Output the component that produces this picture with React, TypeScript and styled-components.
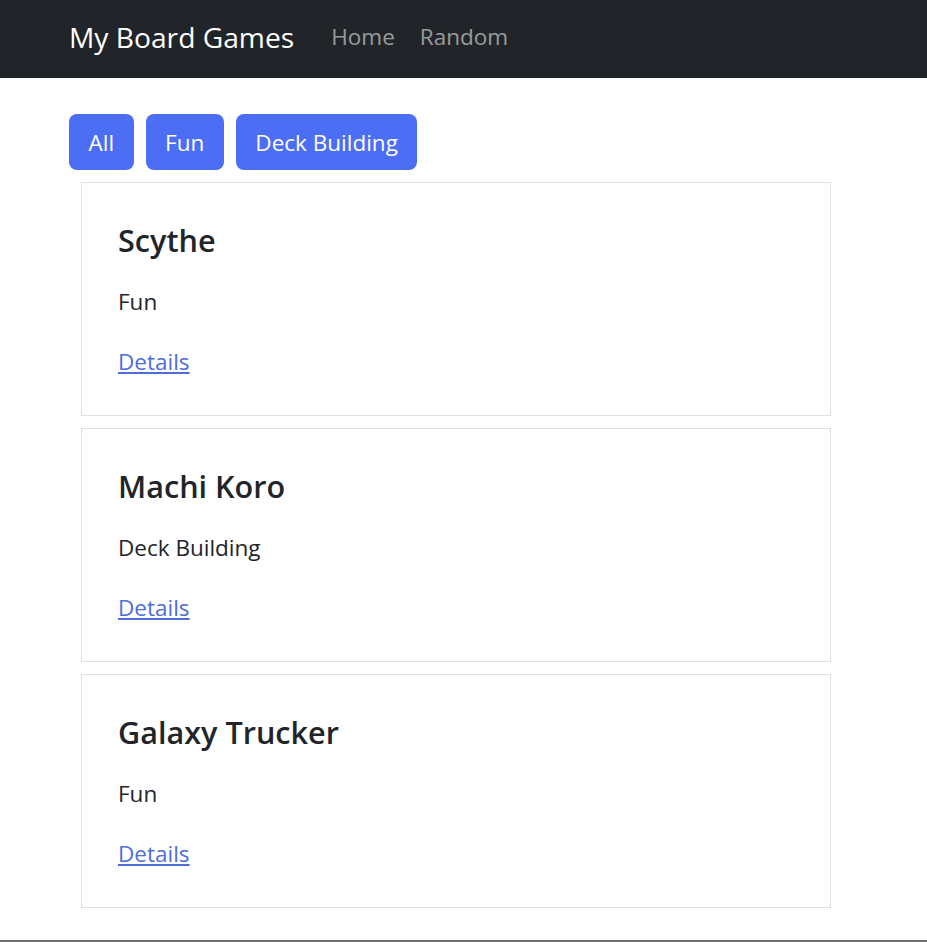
import React from "react";
import styled, { createGlobalStyle } from "styled-components";

const GlobalStyle = createGlobalStyle`
  html, body { margin: 0; padding: 0; background: #fff; }
  body { font-family: "Open Sans", "Noto Sans", "Liberation Sans", sans-serif; color: #212529; }
  * { box-sizing: border-box; }
`;

const Page = styled.div`
  min-height: 100vh;
  border-bottom: 2px solid #6e6e6e;
`;

const Navbar = styled.nav`
  height: 78px;
  background: #212529;
  display: flex;
  align-items: center;
  padding: 0 0 3px 69px;
`;

const Brand = styled.a`
  color: #fff;
  font-size: 28.2px;
  text-decoration: none;
  margin-right: 37px;
  line-height: 1;
`;

const NavLinks = styled.div`
  display: flex;
  gap: 25px;
`;

const NavLink = styled.a`
  color: rgba(255, 255, 255, 0.55);
  font-size: 22.5px;
  line-height: 1;
  text-decoration: none;
`;

const Main = styled.main`
  padding: 36px 0 0 69px;
`;

const Filters = styled.div`
  display: flex;
  gap: 12px;
  margin-bottom: 12px;
`;

const FilterButton = styled.button`
  height: 56px;
  padding: 0 19.5px;
  background: #4c6ef5;
  color: #fff;
  border: none;
  border-radius: 8px;
  font-family: inherit;
  font-size: 22.5px;
`;

const CardList = styled.div`
  display: flex;
  flex-direction: column;
  gap: 12px;
  margin-left: 12px;
  width: 750px;
`;

const Card = styled.section`
  border: 1px solid #dfdfdf;
  height: 234px;
  padding: 39px 36px;
`;

const Title = styled.h2`
  margin: 0 0 26px;
  font-size: 30.6px;
  font-weight: 600;
  line-height: 1.2;
`;

const Tag = styled.p`
  margin: 0 0 27px;
  font-size: 22.5px;
  line-height: 1.5;
`;

const DetailsLink = styled.a`
  font-size: 22.5px;
  line-height: 1.5;
  color: #4d6ddb;
  text-decoration: underline;
`;

const games = [
  { name: "Scythe", tag: "Fun" },
  { name: "Machi Koro", tag: "Deck Building" },
  { name: "Galaxy Trucker", tag: "Fun" },
];

export default function App() {
  return (
    <Page>
      <GlobalStyle />
      <Navbar>
        <Brand href="#">My Board Games</Brand>
        <NavLinks>
          <NavLink href="#">Home</NavLink>
          <NavLink href="#">Random</NavLink>
        </NavLinks>
      </Navbar>
      <Main>
        <Filters>
          <FilterButton>All</FilterButton>
          <FilterButton>Fun</FilterButton>
          <FilterButton>Deck Building</FilterButton>
        </Filters>
        <CardList>
          {games.map((g) => (
            <Card key={g.name}>
              <Title>{g.name}</Title>
              <Tag>{g.tag}</Tag>
              <DetailsLink href="#">Details</DetailsLink>
            </Card>
          ))}
        </CardList>
      </Main>
    </Page>
  );
}
